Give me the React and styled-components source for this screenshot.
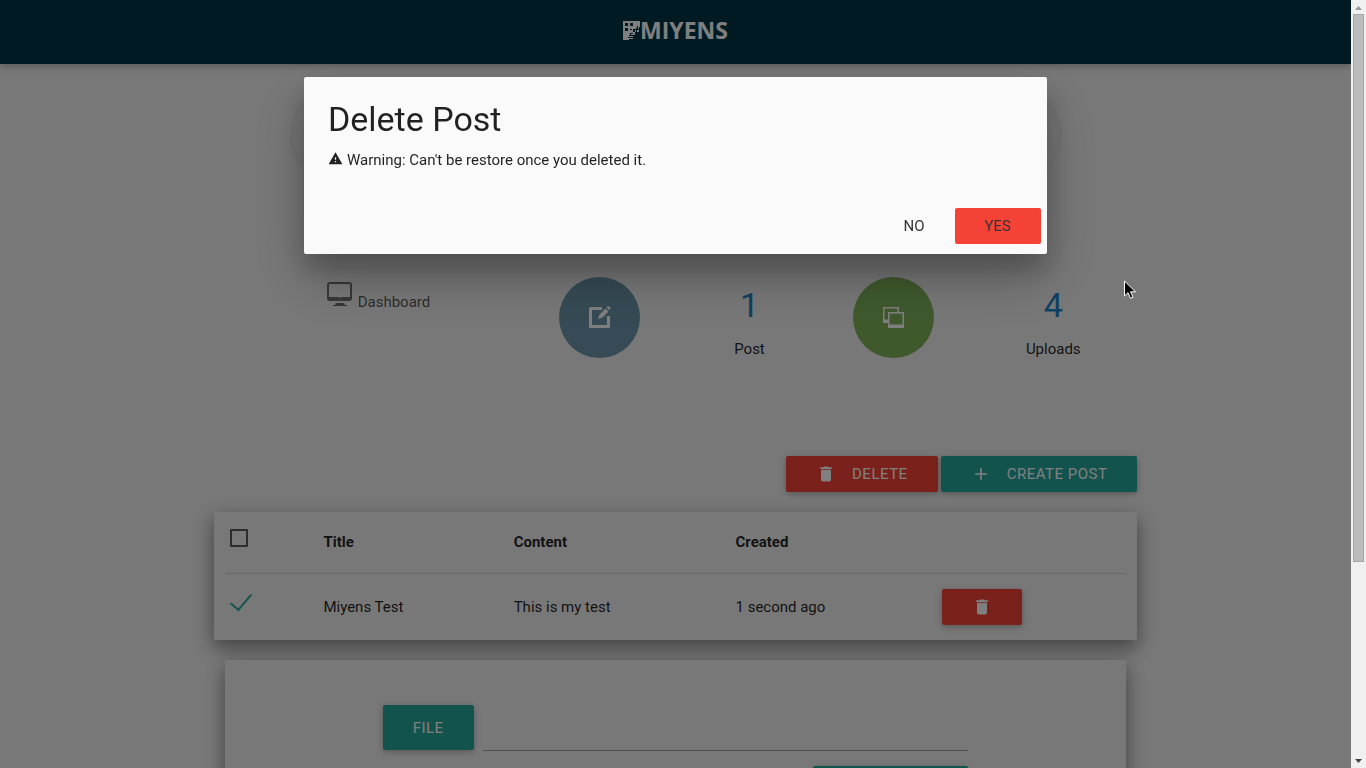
import React from "react";
import styled, { createGlobalStyle, css } from "styled-components";
import { MdAdd, MdDelete, MdWarning } from "react-icons/md";

const GlobalStyle = createGlobalStyle`
  *, *::before, *::after { box-sizing: border-box; }
  body {
    margin: 0;
    overflow: hidden;
    background: #f0f0f0;
    color: rgba(0, 0, 0, 0.87);
    font-family: Roboto, "Liberation Sans", sans-serif;
    font-size: 15px;
    line-height: 22px;
  }
  button, input { font: inherit; }
`;

const raised = css`
  box-shadow: 0 2px 5px 0 rgba(0, 0, 0, 0.16), 0 2px 10px 0 rgba(0, 0, 0, 0.12);
`;

const Page = styled.div`
  height: 100vh;
  overflow: hidden;
  padding-right: 15px;
`;

const Header = styled.header`
  height: 64px;
  display: flex;
  justify-content: center;
  align-items: center;
  background: #003548;
  box-shadow: 0 2px 5px 0 rgba(0, 0, 0, 0.16), 0 2px 10px 0 rgba(0, 0, 0, 0.12);
`;

const Brand = styled.a`
  display: flex;
  align-items: center;
  height: 60px;
  padding-bottom: 4px;
  color: #fff;
  font: bold 23px/30px "Open Sans", sans-serif;
  text-decoration: none;
`;

const Container = styled.main`
  width: 70%;
  margin: 0 auto;
  padding: 25px 11px 0;
`;

const Banner = styled.div`
  width: 770px;
  max-width: 100%;
  height: 92px;
  margin: 0 auto;
  border-radius: 46px;
  box-shadow: 0 0 2px rgba(0, 0, 0, 0.14), inset 0 0 10px rgba(0, 0, 0, 0.06);
`;

const Stats = styled.section`
  display: grid;
  grid-template-columns: 199fr 147fr 153fr 135fr 184fr;
  margin: 96px -8px 0 113px;
  height: 81px;
  justify-items: center;
`;

const DashLink = styled.a`
  display: flex;
  justify-self: start;
  align-items: flex-start;
  gap: 5px;
  padding-top: 4px;
  color: rgba(0, 0, 0, 0.66);
  text-decoration: none;
  span { padding-top: 10px; }
`;

const Circle = styled.button`
  display: grid;
  place-items: center;
  width: 81px;
  height: 81px;
  padding: 0;
  border: 0;
  border-radius: 50%;
  color: #fff;
  background: ${(p) => p.$color};
`;

const Stat = styled.div`
  text-align: center;
  strong {
    display: block;
    margin: 9px 0 14px;
    color: #2183c4;
    font-size: 34px;
    font-weight: 400;
    line-height: 38px;
  }
`;

const Actions = styled.div`
  display: flex;
  justify-content: flex-end;
  gap: 3px;
  margin-top: 98px;
`;

const Button = styled.button`
  display: inline-flex;
  align-items: center;
  justify-content: center;
  gap: 16px;
  height: ${(p) => (p.$tall ? 45 : 36)}px;
  padding: 0 30px;
  border: 0;
  border-radius: 2px;
  color: #fff;
  background: ${(p) => (p.$danger ? "#f44336" : "#26a69a")};
  letter-spacing: 0.5px;
  text-transform: uppercase;
  ${raised}
`;

const card = css`
  background: #f0f0f0;
  box-shadow: 0 8px 17px 0 rgba(0, 0, 0, 0.3), 0 6px 20px 0 rgba(0, 0, 0, 0.19);
`;

const TableCard = styled.section`
  margin-top: 20px;
  padding: 0 11px;
  ${card}
`;

const Table = styled.table`
  width: 100%;
  table-layout: fixed;
  border-collapse: collapse;
  text-align: left;
  th, td { padding: 0 5px; }
  th { height: 61px; }
  thead { border-bottom: 1px solid #d0d0d0; }
  td { height: 67px; }
`;

const CheckCell = styled.td`
  && {
    vertical-align: top;
    padding-top: ${(p) => (p.$head ? 17 : 20)}px;
  }
`;

const Checkbox = styled.input`
  appearance: none;
  display: block;
  width: 18px;
  height: 18px;
  margin: 0;
  border: 2px solid #5a5a5a;
  border-radius: 1px;
  &:checked {
    width: 12px;
    height: 22px;
    margin: -6px 0 0 5px;
    border-color: transparent #26a69a #26a69a transparent;
    border-radius: 0;
    transform: rotate(40deg);
  }
`;

const UploadCard = styled.form`
  margin: 20px 11px 0;
  padding: 45px 158px;
  ${card}
`;

const FileRow = styled.div`
  display: flex;
  gap: 9px;
`;

const FilePath = styled.input`
  flex: 1;
  min-width: 0;
  height: 46px;
  padding: 0;
  border: 0;
  border-bottom: 1px solid #9e9e9e;
  background: transparent;
`;

const SubmitRow = styled.div`
  display: flex;
  justify-content: flex-end;
  margin-top: 15px;
  button { width: 155px; }
`;

const Overlay = styled.div`
  position: fixed;
  inset: 0 15px 0 0;
  background: rgba(0, 0, 0, 0.5);
`;

const Modal = styled.div`
  position: absolute;
  top: 10%;
  left: 0;
  right: 0;
  width: 55%;
  margin: 0 auto;
  border-radius: 2px;
  background: #fafafa;
  box-shadow: 0 16px 28px 0 rgba(0, 0, 0, 0.22), 0 25px 55px 0 rgba(0, 0, 0, 0.21);
`;

const ModalContent = styled.div`
  padding: 24px 24px 27px;
  h4 {
    margin: 0 0 12px;
    font-size: 34px;
    font-weight: 400;
    line-height: 36px;
  }
  p { display: flex; gap: 4px; margin: 0; }
  svg { margin-top: 2px; }
`;

const ModalFooter = styled.div`
  display: flex;
  justify-content: flex-end;
  height: 56px;
  padding: 10px 6px;
`;

const FlatButton = styled.button`
  height: 36px;
  padding: 0 30px;
  border: 0;
  border-radius: 2px;
  color: #343434;
  background: ${(p) => (p.$danger ? "#f44336" : "transparent")};
`;

const Scrollbar = styled.div`
  position: fixed;
  top: 0;
  right: 0;
  bottom: 0;
  display: flex;
  flex-direction: column;
  align-items: center;
  width: 15px;
  background: #f0f0f0;
  svg { flex: none; }
`;

const Track = styled.div`
  flex: 1;
  width: 11px;
`;

const Thumb = styled.div`
  height: 74%;
  border: 1px solid #a6a6a6;
  background: #bcbcbc;
`;

const Pointer = styled.svg`
  position: fixed;
  left: 1124px;
  top: 280px;
`;

const LogoMark = () => (
  <svg width="17" height="19" viewBox="0 0 17 19" aria-hidden="true">
    <path fill="#fff" d="M0 0H17V6H16V11H12V14H10V18H6V19H0Z" />
    <path fill="#003548" d="M2 2h3v3H2zM7 2h3v3H7zM2 7h3v3H2zM7 8h2v1H7zM14 5h1v3h2v1h-3v2h-1V9h-2V8h2V7h1zM10 8h2v3h-2v2H8v1h2v1H6v-1h1v-2h3zM5 16h5v1H5z" />
  </svg>
);

const MonitorIcon = () => (
  <svg width="26" height="26" viewBox="0 0 26 26" aria-hidden="true">
    <rect x="1" y="2" width="23" height="17" rx="2" fill="none" stroke="#707070" strokeWidth="2" />
    <path d="M1 16h23v2q0 2-2 2H3q-2 0-2-2z" fill="#707070" />
    <path d="M9 22h8l1 2h2v1H6v-1h2z" fill="#707070" />
    <path d="M12 16h2v1h-2z" fill="#bbb" />
  </svg>
);

const EditIcon = () => (
  <svg width="24" height="24" viewBox="0 0 24 24" aria-hidden="true">
    <path d="M15 2.500H3.500V20.500H21.500V10" fill="none" stroke="currentColor" strokeWidth="3" strokeLinejoin="round" />
    <path d="M11 13l1.500-4.500 6-6 3 3-6 6zM19.500 1.500l1-1q1-.7 2 .2l.5.600q1 1 .1 2l-.900.900z" fill="currentColor" />
  </svg>
);

const CopyIcon = () => (
  <svg width="22" height="22" viewBox="0 0 22 22" aria-hidden="true">
    <path fill="currentColor" fillRule="evenodd" d="M0 0h16v5h-1.500V1.500H1.500V12.500H5V16H0zM5 5h16v16H5zM6.500 6.500v11h13v-11z" />
  </svg>
);

export default function App() {
  return (
    <>
      <GlobalStyle />
      <Page>
        <Header>
          <Brand href="#"><LogoMark />MIYENS</Brand>
        </Header>
        <Container>
          <Banner />
          <Stats>
            <DashLink href="#"><MonitorIcon /><span>Dashboard</span></DashLink>
            <Circle $color="#6c96aa" aria-label="Edit posts"><EditIcon /></Circle>
            <Stat><strong>1</strong>Post</Stat>
            <Circle $color="#7fb25a" aria-label="View uploads"><CopyIcon /></Circle>
            <Stat><strong>4</strong>Uploads</Stat>
          </Stats>
          <Actions>
            <Button $danger><MdDelete size={20} />Delete</Button>
            <Button><MdAdd size={20} />Create Post</Button>
          </Actions>
          <TableCard>
            <Table>
              <colgroup>
                <col style={{ width: "10.4%" }} />
                <col style={{ width: "21.1%" }} />
                <col style={{ width: "24.6%" }} />
                <col style={{ width: "22.9%" }} />
                <col />
              </colgroup>
              <thead>
                <tr>
                  <CheckCell as="th" $head><Checkbox type="checkbox" aria-label="Select all posts" /></CheckCell>
                  <th>Title</th>
                  <th>Content</th>
                  <th>Created</th>
                  <th />
                </tr>
              </thead>
              <tbody>
                <tr>
                  <CheckCell><Checkbox type="checkbox" defaultChecked aria-label="Select Miyens Test" /></CheckCell>
                  <td>Miyens Test</td>
                  <td>This is my test</td>
                  <td>1 second ago</td>
                  <td><Button $danger aria-label="Delete Miyens Test"><MdDelete size={20} /></Button></td>
                </tr>
              </tbody>
            </Table>
          </TableCard>
          <UploadCard>
            <FileRow>
              <Button type="button" $tall>File</Button>
              <FilePath type="text" aria-label="File path" />
            </FileRow>
            <SubmitRow><Button type="submit" aria-label="Upload" /></SubmitRow>
          </UploadCard>
        </Container>
      </Page>
      <Overlay>
        <Modal role="dialog" aria-labelledby="delete-title">
          <ModalContent>
            <h4 id="delete-title">Delete Post</h4>
            <p><MdWarning size={15} />Warning: Can't be restore once you deleted it.</p>
          </ModalContent>
          <ModalFooter>
            <FlatButton>NO</FlatButton>
            <FlatButton $danger>YES</FlatButton>
          </ModalFooter>
        </Modal>
      </Overlay>
      <Scrollbar>
        <svg width="15" height="14" viewBox="0 0 15 14"><path d="M4 10L7.500 6L11 10Z" fill="#999" /></svg>
        <Track><Thumb /></Track>
        <svg width="15" height="14" viewBox="0 0 15 14"><path d="M4 5L7.500 9L11 5Z" fill="#444" /></svg>
      </Scrollbar>
      <Pointer width="13" height="20" viewBox="0 0 13 20" aria-hidden="true">
        <path d="M.5 1V16L4 12.700L6.500 18.300L9 17.200L6.600 11.800H11.500Z" fill="#000" stroke="#fff" />
      </Pointer>
    </>
  );
}
